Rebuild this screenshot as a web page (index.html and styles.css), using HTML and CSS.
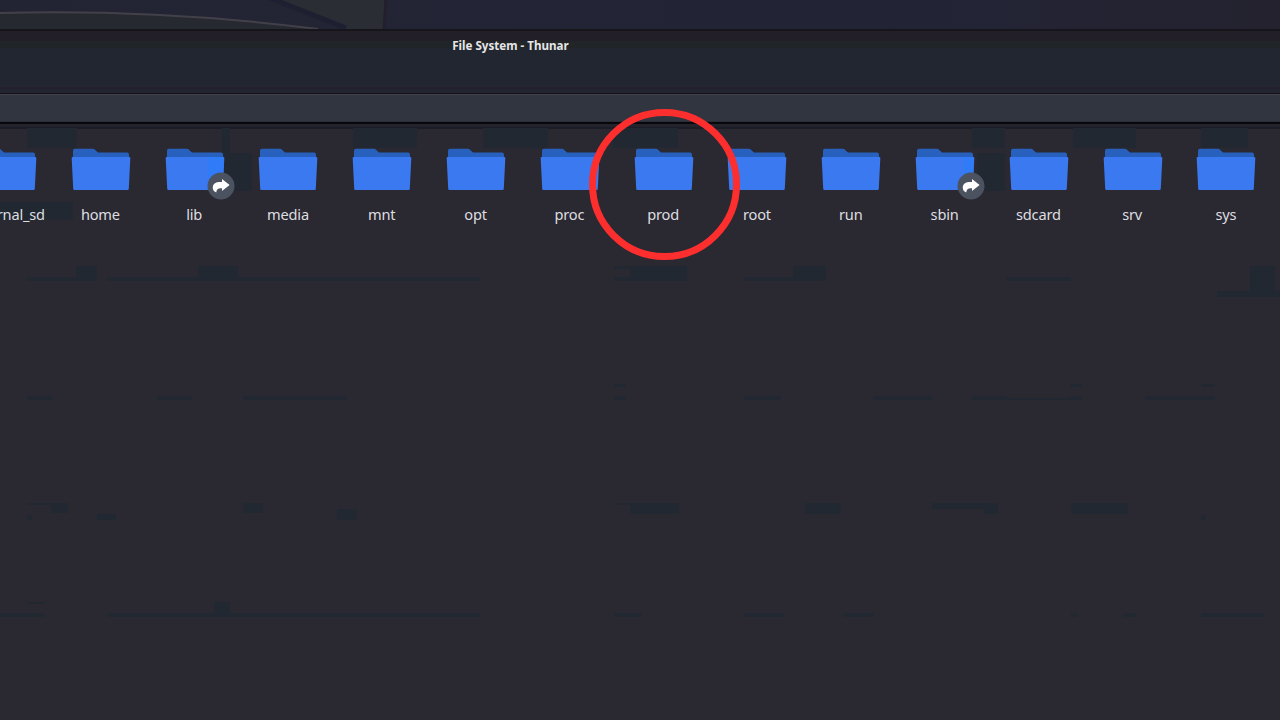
FILE: index.html
```
<!DOCTYPE html>
<html lang="en">
<head>
<meta charset="utf-8">
<title>File System - Thunar</title>
<link rel="stylesheet" href="styles.css">
</head>
<body>
<svg width="0" height="0" class="defs">
  <symbol id="folder" viewBox="0 0 60 44">
    <path fill="#2860bd" d="M2 16V2.800Q2 .8 4 .8H22Q23 .8 24 1.800L27 4.400H56Q58 4.400 58 6.400V16Z"/>
    <path fill="#3b79f0" d="M1.500 9H58.500Q59.400 9 59.300 10.400L57.800 40.700Q57.700 42 56.500 42H3.500Q2.300 42 2.200 40.700L.7 10.400Q.6 9 1.500 9Z"/>
  </symbol>
  <symbol id="link" viewBox="0 0 28 28">
    <circle cx="14" cy="14" r="13.500" fill="#4b5260"/>
    <path fill="#fff" d="M15 7L22.600 13L15 19V16.200C11.500 15.800 9.300 17 9.300 20.500C6.500 19.800 5.500 17 5.800 14.800C6.300 11 9.500 9.700 15 10Z"/>
  </symbol>
</svg>
<main class="screen">
  <svg class="wallpaper" viewBox="0 0 1280 29">
    <defs><linearGradient id="sky"><stop offset="0" stop-color="#232433"/><stop offset=".7" stop-color="#222436"/><stop offset="1" stop-color="#24222f"/></linearGradient></defs>
    <rect width="1280" height="29" fill="url(#sky)"/>
    <path d="M270 0H384V29H345Z" fill="#2b2d34"/>
    <path d="M0 13Q160 9 318 29H0Z" fill="#262930"/>
    <path d="M0 13Q160 9 318 29" fill="none" stroke="#42414a" stroke-width="2"/>
    <path d="M270-2L346 28" fill="none" stroke="#1d2030" stroke-width="5"/>
    <path d="M386 0L384 29" stroke="#241f2e" stroke-width="3"/>
  </svg>
  <header class="titlebar"><h1 class="title">File System - Thunar</h1></header>
  <div class="toolbar"></div>
  <div class="divider"></div>
  <section class="pane">
    <svg class="texture" viewBox="0 128 1280 592"><path fill="#222831" d="M27 128h50v20H27zM222 128h8v25h-8zM224 153h28v38h-28zM353 128h64v20h-64zM483 128h65v20h-65zM613 128h65v20h-65zM972 128h33v20h-33zM977 153h28v38h-28zM1073 128h63v20h-63zM1201 128h47v20h-47zM0 202h73v18H0zM76 266h21v15H76zM27 277h50v4H27zM107 277h373v4H107zM198 266h40v13h-40zM614 266h73v3h-73zM630 269h57v12h-57zM614 277h20v4h-20zM744 277h51v4h-51zM793 266h33v15h-33zM1006 277h65v4h-65zM1250 266h25v31h-25zM1217 291h63v6h-63zM27 396h25v4H27zM157 396h35v4h-35zM243 396h104v4H243zM614 384h12v3h-12zM614 396h12v4h-12zM744 396h37v4h-37zM873 396h59v4h-59zM972 396h34v4h-34zM1006 398h64v2h-64zM1070 396h12v4h-12zM1070 384h12v3h-12zM1201 384h14v3h-14zM1145 396h70v4h-70zM51 503h17v10H51zM27 503h25v2H27zM27 515h5v5h-5zM97 514h19v6H97zM243 503h20v10h-20zM337 509h20v11h-20zM614 503h16v2h-16zM630 503h49v11h-49zM805 503h36v11h-36zM932 503h66v6h-66zM984 509h14v5h-14zM1071 503h57v11h-57zM1201 515h5v5h-5zM0 613h44v4H0zM27 602h18v2H27zM108 613h372v4H108zM214 602h16v12h-16zM614 613h28v4h-28zM744 613h40v4h-40zM844 613h30v4h-30zM1071 613h6v4h-6zM1124 613h12v4h-12zM1201 613h63v4h-63z"/></svg>
    <ul class="files">
      <li class="file"><div class="icon"><svg class="folder"><use href="#folder"/></svg></div><span class="name">external_sd</span></li>
      <li class="file"><div class="icon"><svg class="folder"><use href="#folder"/></svg></div><span class="name">home</span></li>
      <li class="file"><div class="icon"><svg class="folder"><use href="#folder"/><path class="sheen" d="M43 9H59L58 29H43Z"/></svg><svg class="emblem"><use href="#link"/></svg></div><span class="name">lib</span></li>
      <li class="file"><div class="icon"><svg class="folder"><use href="#folder"/></svg></div><span class="name">media</span></li>
      <li class="file"><div class="icon"><svg class="folder"><use href="#folder"/></svg></div><span class="name">mnt</span></li>
      <li class="file"><div class="icon"><svg class="folder"><use href="#folder"/></svg></div><span class="name">opt</span></li>
      <li class="file"><div class="icon"><svg class="folder"><use href="#folder"/></svg></div><span class="name">proc</span></li>
      <li class="file"><div class="icon"><svg class="folder"><use href="#folder"/></svg></div><span class="name">prod</span></li>
      <li class="file"><div class="icon"><svg class="folder"><use href="#folder"/></svg></div><span class="name">root</span></li>
      <li class="file"><div class="icon"><svg class="folder"><use href="#folder"/></svg></div><span class="name">run</span></li>
      <li class="file"><div class="icon"><svg class="folder"><use href="#folder"/><path class="sheen" d="M49 9H59L58 29H49Z"/></svg><svg class="emblem"><use href="#link"/></svg></div><span class="name">sbin</span></li>
      <li class="file"><div class="icon"><svg class="folder"><use href="#folder"/></svg></div><span class="name">sdcard</span></li>
      <li class="file"><div class="icon"><svg class="folder"><use href="#folder"/></svg></div><span class="name">srv</span></li>
      <li class="file"><div class="icon"><svg class="folder"><use href="#folder"/></svg></div><span class="name">sys</span></li>
    </ul>
  </section>
  <div class="highlight"></div>
</main>
</body>
</html>
```
FILE: styles.css
```
* { box-sizing: border-box; }
body { margin: 0; background: #2a2830; font-family: "Noto Sans", sans-serif; }
.defs { position: absolute; }
.screen { position: relative; display: flex; flex-direction: column; width: 1280px; height: 720px; overflow: hidden; }
.wallpaper { display: block; width: 1280px; height: 29px; flex: none; }
.titlebar { height: 65px; flex: none; border-top: 2px solid #15151a; border-bottom: 1px solid #121217; background: linear-gradient(#231f28 0 10px, #222528 10px 17px, #222630 17px 56px, #23212e 56px 58px, #22252f 58px); }
.title { margin: 0; width: 1021px; padding-top: 6px; text-align: center; font-size: 11.6px; line-height: 17px; font-weight: 700; color: #e6e6e8; }
.toolbar { height: 28px; flex: none; background: #31353f; border-top: 1px solid #41414b; border-bottom: 1px solid #292d37; }
.divider { height: 7px; flex: none; background: linear-gradient(#08080c 0 2px, #22232b 2px 5px, #1b1c25 5px); }
.pane { position: relative; flex: 1; }
.texture { position: absolute; left: 0; top: -1px; width: 1280px; height: 592px; }
.files { position: relative; display: grid; grid-template-columns: repeat(14, 93.8px); margin: 0 0 0 -39.800px; padding: 19px 0 0; list-style: none; }
.file { display: flex; flex-direction: column; align-items: center; }
.icon { position: relative; width: 60px; height: 44px; }
.folder { display: block; width: 60px; height: 44px; }
.sheen { fill: #2f7bf8; }
.emblem { position: absolute; left: 42px; top: 24px; width: 28px; height: 28px; }
.name { margin: 12px 1px 0 0; font-size: 14.600px; letter-spacing: -0.2px; line-height: 20px; color: #dedee0; white-space: nowrap; }
.highlight { position: absolute; left: 589px; top: 109px; width: 151px; height: 151px; border: 7px solid #fc2e2e; border-radius: 50%; }
```
